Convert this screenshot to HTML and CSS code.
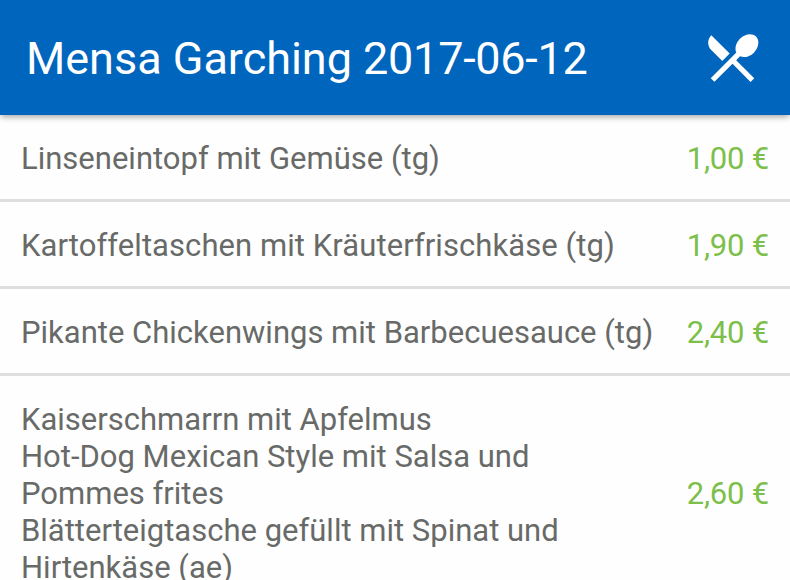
FILE: index.html
```html
<!DOCTYPE html>
<html lang="de">
<head>
<meta charset="utf-8">
<title>Mensa Garching</title>
<link rel="stylesheet" href="styles.css">
</head>
<body>
<header class="bar">
  <h1 class="title">Mensa Garching <span class="date">2017-06-12</span></h1>
  <svg class="icon" viewBox="0 0 24 24" aria-hidden="true"><path fill="#fff" d="M8.1 13.34l2.83-2.83L3.91 3.5c-1.56 1.56-1.56 4.09 0 5.66l4.19 4.18zm6.78-1.81c1.53.71 3.68.21 5.27-1.38 1.91-1.91 2.28-4.65.81-6.12-1.46-1.46-4.2-1.1-6.12.81-1.59 1.59-2.09 3.74-1.38 5.27L3.7 19.87l1.41 1.41L12 14.41l6.88 6.88 1.41-1.41L13.41 13l1.47-1.47z"/></svg>
</header>
<ul class="menu">
  <li class="row"><span class="dish">Linseneintopf mit Gemüse (tg)</span><span class="price">1,00 €</span></li>
  <li class="row"><span class="dish dish-wide">Kartoffeltaschen mit Kräuterfrischkäse (tg)</span><span class="price">1,90 €</span></li>
  <li class="row"><span class="dish">Pikante Chickenwings mit Barbecuesauce (tg)</span><span class="price">2,40 €</span></li>
  <li class="row"><span class="dish">Kaiserschmarrn mit Apfelmus<br>Hot-Dog Mexican Style mit Salsa und<br>Pommes frites<br>Blätterteigtasche gefüllt mit Spinat und<br>Hirtenkäse (ae)</span><span class="price">2,60 €</span></li>
</ul>
</body>
</html>
```
FILE: styles.css
```css
html, body {
  height: 100%;
}

body {
  margin: 0;
  overflow: hidden;
  background: #fefefe;
  font-family: Roboto, sans-serif;
  font-variant-ligatures: none;
}

.bar {
  display: flex;
  align-items: center;
  justify-content: space-between;
  box-sizing: border-box;
  height: 115px;
  padding: 1px 26px 0 26px;
  background: #0065bd;
  box-shadow: 0 3px 6px -1px rgba(0, 0, 0, 0.35);
}

.title {
  margin: 0;
  color: #fff;
  font-size: 45px;
  font-weight: 400;
  letter-spacing: -0.02px;
  white-space: nowrap;
}

.date {
  letter-spacing: -0.28px;
}

.icon {
  width: 63px;
  height: 63px;
  margin-bottom: 2px;
}

.menu {
  margin: 0;
  padding: 0;
  list-style: none;
}

.row {
  display: flex;
  align-items: center;
  justify-content: space-between;
  padding: 25px 21px 22px;
  border-bottom: 3px solid #dfdfdf;
  font-size: 31px;
  line-height: 37px;
}

.dish {
  color: #686a68;
  white-space: nowrap;
}

.dish-wide {
  letter-spacing: 0.07px;
}

.price {
  color: #7cbf4b;
  letter-spacing: -0.2px;
  white-space: nowrap;
}
```
